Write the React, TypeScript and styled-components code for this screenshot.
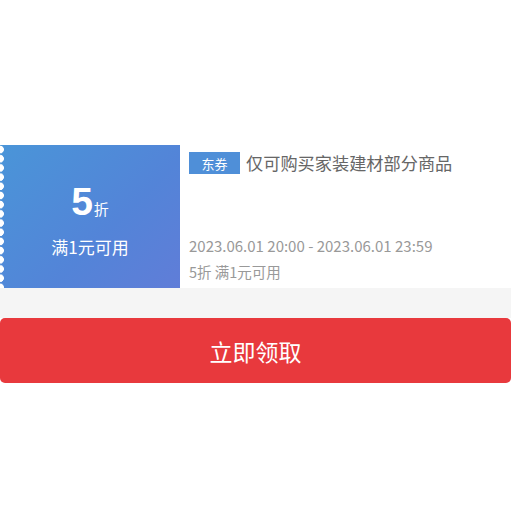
import React from "react";
import styled, { createGlobalStyle } from "styled-components";

const Global = createGlobalStyle`
  html, body { margin: 0; padding: 0; background: #fff; }
  body { font-family: "Noto Sans CJK SC", "Noto Sans", sans-serif; }
`;

const Page = styled.div`
  width: 511px;
  padding-top: 145px;
  display: flex;
  flex-direction: column;
`;

const Card = styled.div`
  display: flex;
  height: 143px;
  background: #fff;
`;

const Left = styled.div`
  position: relative;
  width: 180px;
  flex-shrink: 0;
  background: linear-gradient(135deg, #4a95d8 0%, #5384d8 60%, #607dd8 100%);
  color: #fff;
  display: flex;
  flex-direction: column;
  align-items: center;
  justify-content: center;
  &::before {
    content: "";
    position: absolute;
    left: 0;
    top: 0;
    bottom: 0;
    width: 5px;
    background: radial-gradient(circle at 0 4.5px, #fff 3.6px, transparent 4.2px) 0 0 / 5px 9.2px repeat-y;
  }
`;

const Amount = styled.div`
  display: flex;
  align-items: baseline;
  line-height: 1;
  margin-top: 4px;
`;

const Big = styled.span`
  font-family: "Liberation Sans", Arial, sans-serif;
  font-weight: 700;
  font-size: 39px;
`;

const Unit = styled.span`
  font-size: 15px;
  margin-left: 1px;
`;

const Cond = styled.div`
  font-size: 17px;
  margin-top: 17px;
  line-height: 1;
`;

const Right = styled.div`
  flex: 1;
  padding: 7px 0 0 9px;
  display: flex;
  flex-direction: column;
`;

const TitleRow = styled.div`
  display: flex;
  align-items: center;
  gap: 6px;
`;

const Tag = styled.span`
  width: 51px;
  height: 22px;
  background: #4f8fd8;
  color: #fff;
  font-size: 13px;
  display: flex;
  align-items: center;
  justify-content: center;
`;

const Title = styled.span`
  font-size: 17.2px;
  color: #666;
  line-height: 22px;
`;

const Spacer = styled.div`
  flex: 1;
`;

const Date = styled.div`
  font-size: 15px;
  color: #999;
  line-height: 20px;
`;

const Sub = styled.div`
  font-size: 14.5px;
  color: #999;
  line-height: 20px;
  margin: 6px 0 6px;
`;

const Band = styled.div`
  height: 30px;
  background: #f5f5f5;
`;

const Button = styled.button`
  height: 65px;
  border: none;
  border-radius: 5px;
  background: #e8393d;
  color: #fff;
  font-family: "Noto Sans CJK SC", sans-serif;
  font-size: 23px;
  padding: 0;
  cursor: pointer;
`;

export default function App() {
  return (
    <>
      <Global />
      <Page>
        <Card>
          <Left>
            <Amount>
              <Big>5</Big>
              <Unit>折</Unit>
            </Amount>
            <Cond>满1元可用</Cond>
          </Left>
          <Right>
            <TitleRow>
              <Tag>东券</Tag>
              <Title>仅可购买家装建材部分商品</Title>
            </TitleRow>
            <Spacer />
            <Date>2023.06.01 20:00 - 2023.06.01 23:59</Date>
            <Sub>5折 满1元可用</Sub>
          </Right>
        </Card>
        <Band />
        <Button>立即领取</Button>
      </Page>
    </>
  );
}
